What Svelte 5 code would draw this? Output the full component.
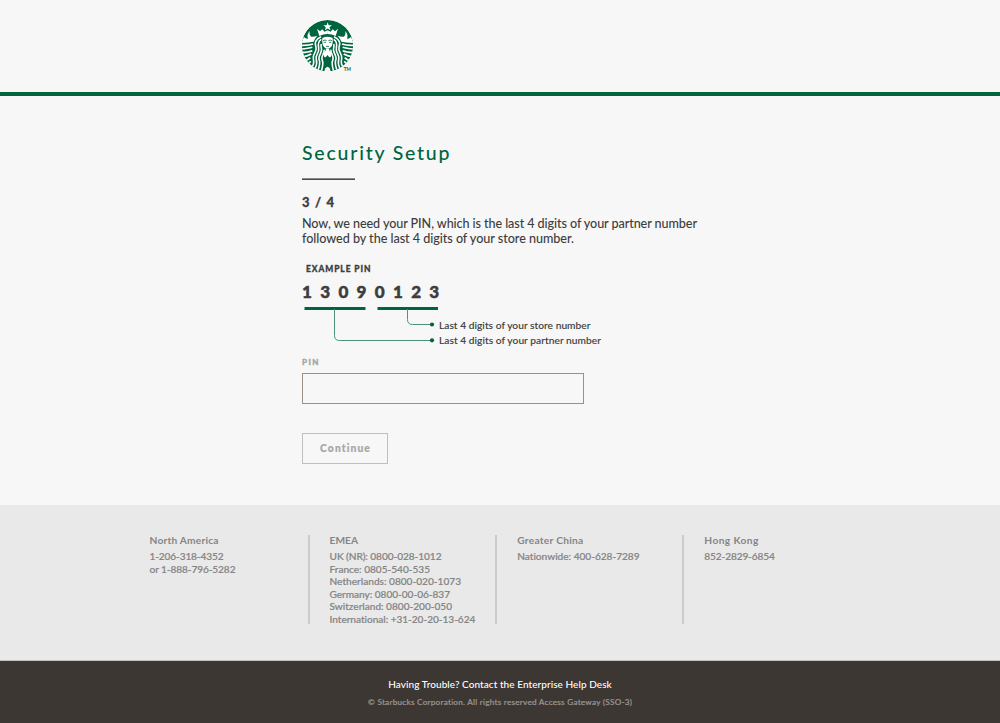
<script>
  // Spreads a line of text over the given width by adjusting its tracking.
  function fit(node, width) {
    node.style.letterSpacing = '0px';
    const natural = node.getBoundingClientRect().width;
    const count = node.textContent.length;
    const gap = (width - natural) / (count - 1);
    node.style.letterSpacing = `${gap}px`;
    node.style.marginRight = `${-gap}px`;
  }

  const intro = [
    ['Now, we need your PIN, which is the last 4 digits of your partner number', 395],
    ['followed by the last 4 digits of your store number.', 272]
  ];

  const regions = [
    { name: 'North America', width: 69, lines: [['1-206-318-4352', 74], ['or 1-888-796-5282', 86]] },
    {
      name: 'EMEA', width: 28.5,
      lines: [
        ['UK (NR): 0800-028-1012', 112],
        ['France: 0805-540-535', 100.5],
        ['Netherlands: 0800-020-1073', 131.5],
        ['Germany: 0800-00-06-837', 120.5],
        ['Switzerland: 0800-200-050', 122.5],
        ['International: +31-20-20-13-624', 146]
      ]
    },
    { name: 'Greater China', width: 66, lines: [['Nationwide: 400-628-7289', 122.5]] },
    { name: 'Hong Kong', width: 54, lines: [['852-2829-6854', 70.5]] }
  ];
</script>

<div class="page">
  <header>
    <svg class="logo" viewBox="12 12 162 162" role="img" aria-label="Starbucks">
      <defs>
        <clipPath id="disc"><circle cx="91.5" cy="92" r="77" /></clipPath>
        <g id="half">
          <path class="w" d="M60 41 L69 49 L76 43 L82 50 L92 46 V57 Q78 57 67 63 Z" />
          <path class="w" d="M39 48 Q35 57 42 65 Q51 66 61 62 Q54 70 50 80 Q39 82 14 84 Q17 73 21 66 Q27 73 33 71 Q28 59 39 48Z" />
          <path class="l" d="M48 87 Q35 92 12 91 M46 97 Q35 101 12 102 M46 107 Q36 111 12 113 M43 117 Q34 122 15 126 M40 128 Q34 134 23 138 M41 139 Q37 145 30 149" />
          <path class="h" d="M72 65 C53 74 53 87 57 97 C61 112 45 117 49 132 C52 143 49 151 44 157" />
          <path class="h" d="M73 73 C61 80 63 90 65 99 C68 115 53 119 58 134 C62 148 56 155 52 166" />
          <path class="h" d="M73 87 C70 93 75 99 73 107 C71 120 62 123 67 136 C71 149 64 158 62 172" />
          <path class="h" d="M81 104 C84 115 70 123 76 136 C81 148 74 160 72 175" />
        </g>
      </defs>
      <g clip-path="url(#disc)">
        <circle class="g" cx="91.5" cy="92" r="77" />
        <path class="w" d="M92 22 L95.2 31 L105 31 L97.5 37 L100.5 46 L92 40.5 L83.5 46 L86.5 37 L79 31 L88.8 31Z" />
        <use href="#half" />
        <use href="#half" transform="translate(183 0) scale(-1 1)" />
        <path class="w" d="M76 69 Q91.5 62 107 69 Q109 90 101 97 Q91.5 106 82 97 Q74 90 76 69Z" />
        <path class="w" d="M87 101 H96 Q96 109 104 115 Q104 129 91.5 132 Q79 129 79 115 Q87 109 87 101Z" />
        <path class="d" d="M78 77 Q84 73 89 77 M105 77 Q99 73 94 77 M80 82 H87 M96 82 H103 M87 94 H96" />
        <path class="g" d="M91.5 120 Q95 127 101 128 Q94 140 98 150 Q99 162 96 174 H87 Q84 162 85 150 Q89 140 82 128 Q88 127 91.5 120Z" />
        <path class="bg" d="M136 158 H174 V174 H136Z" />
      </g>
      <path class="bg" d="M80 174 L85 160 Q91.5 150 98 160 L103 174Z" />
      <text x="140" y="168" class="tm">TM</text>
    </svg>
  </header>

  <main>
    <h1><span use:fit={147.5}>Security Setup</span></h1>
    <div class="rule"></div>
    <div class="step"><span use:fit={32}>3 / 4</span></div>
    <div class="intro">
      {#each intro as [line, width]}<div><span use:fit={width}>{line}</span></div>{/each}
    </div>
    <div class="example"><span use:fit={64.5}>EXAMPLE PIN</span></div>
    <div class="digits">{#each '13090123' as digit}<span>{digit}</span>{/each}</div>
    <div class="diagram">
      <svg width="136" height="42" viewBox="302 306 136 42" aria-hidden="true">
        <path class="g" d="M304.5 307H365.5V310H304.5ZM377.5 307H438.5V310H377.5Z" />
        <path class="wire" d="M334.5 309V335.5Q334.5 340.5 339.5 340.5H432M407.5 309V319.5Q407.5 324.5 412.5 324.5H432" />
        <circle class="g" cx="432" cy="324.5" r="2.1" />
        <circle class="g" cx="432" cy="340.3" r="2.1" />
      </svg>
      <div class="notes">
        <div><span use:fit={151.5}>Last 4 digits of your store number</span></div>
        <div><span use:fit={162}>Last 4 digits of your partner number</span></div>
      </div>
    </div>
    <label for="pin"><span use:fit={16.5}>PIN</span></label>
    <input id="pin" type="text" />
    <button type="button"><span use:fit={50}>Continue</span></button>
  </main>

  <section class="regions">
    {#each regions as region}
      <div class="region">
        <h2><span use:fit={region.width}>{region.name}</span></h2>
        {#each region.lines as [line, width]}<div class="line"><span use:fit={width}>{line}</span></div>{/each}
      </div>
    {/each}
  </section>

  <footer>
    <div class="help"><span use:fit={223.5}>Having Trouble? Contact the Enterprise Help Desk</span></div>
    <div class="copy"><span use:fit={264}>© Starbucks Corporation. All rights reserved Access Gateway (SSO-3)</span></div>
  </footer>
</div>

<style>
  :global(body) { margin: 0; }
  .page {
    width: 1000px; height: 723px; overflow: hidden;
    display: flex; flex-direction: column;
    background: #f7f7f7; color: #3d3d3d;
    font-family: Lato, "Open Sans", sans-serif;
  }
  span { display: inline-block; white-space: pre; }
  header {
    box-sizing: border-box; height: 96px; flex: none;
    padding: 19px 0 0 301px; border-bottom: 4px solid #00643f;
  }
  .logo { display: block; width: 54px; height: 54px; }
  .g { fill: #00643f; }
  .w { fill: #fff; }
  .bg { fill: #f7f7f7; }
  .l { fill: none; stroke: #fff; stroke-width: 5; }
  .h { fill: none; stroke: #fff; stroke-width: 4.8; }
  .d { fill: none; stroke: #00643f; stroke-width: 2.4; }
  .wire { fill: none; stroke: #4d9279; stroke-width: 1; }
  .tm { font: 700 14px Lato, sans-serif; fill: #00643f; }
  main {
    box-sizing: border-box; height: 409px; flex: none;
    padding: 44px 0 0 302px; display: flex; flex-direction: column; align-items: flex-start;
  }
  h1 { margin: 0; font-size: 19.5px; line-height: 26px; font-weight: 500; color: #00643f; }
  .rule { width: 53px; height: 2px; margin: 12px 0 0 -0.5px; background: linear-gradient(#8a8a8a 50%, #4c4c4c 50%); }
  .step { margin-top: 14px; font-size: 13px; line-height: 16px; font-weight: 900; -webkit-text-stroke: 0.3px; }
  .intro { margin-top: 6px; font-size: 12.6px; line-height: 15px; font-weight: 500; }
  .example { margin: 17px 0 0 4px; font-size: 8.4px; line-height: 12px; font-weight: 900; -webkit-text-stroke: 0.3px; }
  .digits {
    display: grid; grid-template-columns: repeat(8, 18.2px); margin-top: 7px;
    font-size: 17px; line-height: 20px; font-weight: 900; -webkit-text-stroke: 0.5px;
  }
  .diagram { display: flex; margin-top: 4px; height: 42px; }
  .notes { padding: 12px 0 0 1px; font-size: 10.2px; line-height: 15px; font-weight: 500; -webkit-text-stroke: 0.1px; }
  label { margin-top: 8px; font-size: 8px; line-height: 12px; font-weight: 900; color: #a5a5a5; -webkit-text-stroke: 0.3px; }
  input {
    box-sizing: border-box; width: 282px; height: 31px; margin-top: 5px; padding: 0 8px;
    border: 1px solid #9c9085; background: transparent; border-radius: 0; outline: 0; font: inherit;
  }
  button {
    box-sizing: border-box; width: 86px; height: 31px; margin-top: 29px; padding: 0 0 1px;
    border: 1px solid #bfbfbf; background: transparent; color: #a8a8a8;
    font: 900 10.3px Lato, sans-serif; -webkit-text-stroke: 0.2px;
  }
  .regions {
    box-sizing: border-box; height: 156px; flex: none; padding: 30px 0 0 121px;
    display: flex; background: #e9e9e9; border-bottom: 1px solid #c2c2be; color: #858585;
  }
  .region {
    box-sizing: border-box; width: 187.3px; height: 89px; padding-left: 20.2px;
    border-left: 2px solid #cbcbcb; margin-left: -0.2px;
  }
  .region:first-child { border-left-color: transparent; padding-left: 26.7px; }
  .region:nth-child(2) { padding-left: 19.6px; }
  h2 { margin: -1px 0 4px; font-size: 10.2px; line-height: 12px; font-weight: 700; }
  .line { font-size: 10.1px; line-height: 12.6px; font-weight: 500; -webkit-text-stroke: 0.2px; }
  footer {
    flex: 1; display: flex; flex-direction: column; align-items: center;
    padding-top: 16px; background: #3d3733;
  }
  .help { font-size: 10px; line-height: 14px; font-weight: 500; color: #fff; }
  .copy { margin-top: 5px; font-size: 8.2px; line-height: 13px; font-weight: 500; color: #999591; -webkit-text-stroke: 0.2px; }
</style>
